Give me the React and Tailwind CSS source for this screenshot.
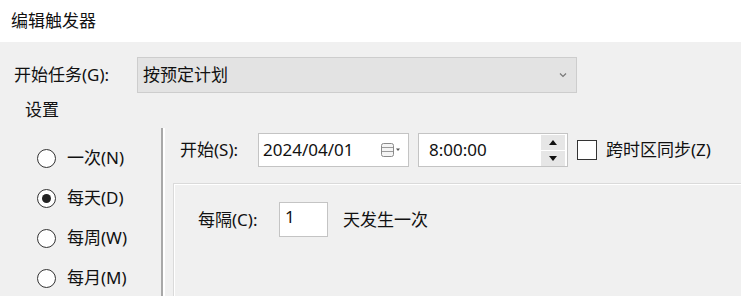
import { useState } from 'react';

const FONT = "font-['Noto_Sans','Noto_Sans_CJK_SC',sans-serif]";

const options = [
  { key: 'once', label: '一次(N)' },
  { key: 'daily', label: '每天(D)' },
  { key: 'weekly', label: '每周(W)' },
  { key: 'monthly', label: '每月(M)' },
];

function Radio({ checked, label, onClick }) {
  return (
    <div className="flex items-center h-[40px] cursor-default" onClick={onClick}>
      <span className="w-[19px] h-[19px] rounded-full border-[1.5px] border-[#333] bg-white flex items-center justify-center">
        {checked && <span className="w-[9px] h-[9px] rounded-full bg-[#222]" />}
      </span>
      <span className="ml-[11px]">{label}</span>
    </div>
  );
}

function CalendarIcon() {
  return (
    <svg width="22" height="16" viewBox="0 0 22 16" className="mr-[6px]">
      <rect x="1.5" y="1.5" width="12" height="13" rx="2" fill="#f4f4f4" stroke="#8a8a8a" strokeWidth="1" />
      <line x1="2" y1="5.5" x2="13" y2="5.5" stroke="#9a9a9a" />
      <line x1="2" y1="9.5" x2="13" y2="9.5" stroke="#9a9a9a" />
      <path d="M16 6.5 L20 6.5 L18 9 Z" fill="#555" />
    </svg>
  );
}

export default function App() {
  const [freq, setFreq] = useState('daily');
  const [sync, setSync] = useState(false);

  return (
    <div className={`w-[741px] h-[296px] overflow-hidden bg-[#f0f0f0] text-[17px] text-[#111] ${FONT}`}>
      {/* Title */}
      <div className="h-[42px] bg-white flex items-center px-[11px] text-[17px]">编辑触发器</div>

      {/* Begin task */}
      <div className="flex items-center mt-[15px] pl-[14px]">
        <span className="w-[123px]">开始任务(G):</span>
        <div className="w-[440px] h-[36px] bg-[#e3e3e3] border border-[#cdcdcd] flex items-center justify-between pl-[5px] pr-[8px]">
          <span>按预定计划</span>
          <svg width="10" height="8" viewBox="0 0 10 8">
            <path d="M2 2.5 L5 5.5 L8 2.5" fill="none" stroke="#777" strokeWidth="1.2" />
          </svg>
        </div>
      </div>

      <div className="h-[24px] flex items-center pl-[25px] mt-[5px]">设置</div>

      {/* Settings */}
      <div className="flex mt-[6px] h-[200px]">
        <div className="w-[161px] pl-[37px] pt-[10px]">
          {options.map((o) => (
            <Radio key={o.key} label={o.label} checked={freq === o.key} onClick={() => setFreq(o.key)} />
          ))}
        </div>
        <div className="w-[2px] bg-[#a8a8a8]" />
        <div className="w-[2px] bg-white" />

        <div className="flex-1 pt-[5px]">
          <div className="flex items-center h-[34px] pl-[15px]">
            <span className="w-[78px]">开始(S):</span>
            <div className="w-[151px] h-[34px] bg-white border border-[#c4c4c4] flex items-center justify-between pl-[4px]">
              <span>2024/04/01</span>
              <CalendarIcon />
            </div>
            <div className="ml-[9px] w-[150px] h-[34px] bg-white border border-[#c4c4c4] flex items-center justify-between pl-[10px] pr-[2px]">
              <span>8:00:00</span>
              <div className="flex flex-col gap-[1px]">
                <div className="w-[24px] h-[15px] bg-[#e6e6e6] flex items-center justify-center">
                  <svg width="8" height="5" viewBox="0 0 8 5"><path d="M0 5 L4 0 L8 5 Z" fill="#111" /></svg>
                </div>
                <div className="w-[24px] h-[15px] bg-[#e6e6e6] flex items-center justify-center">
                  <svg width="8" height="5" viewBox="0 0 8 5"><path d="M0 0 L4 5 L8 0 Z" fill="#111" /></svg>
                </div>
              </div>
            </div>
            <div className="ml-[9px] flex items-center cursor-default" onClick={() => setSync(!sync)}>
              <span className="w-[20px] h-[20px] border-[1.5px] border-[#333] bg-white flex items-center justify-center">
                {sync && <span className="text-[14px] leading-none">✓</span>}
              </span>
              <span className="ml-[9px]">跨时区同步(Z)</span>
            </div>
          </div>

          <div className="ml-[8px] mt-[16px] h-[200px] border-t border-l border-[#dadada] bg-[#f0f0f0] shadow-[inset_1px_1px_0_#ffffff]">
            <div className="flex items-center pl-[24px] pt-[18px]">
              <span className="w-[81px]">每隔(C):</span>
              <div className="w-[49px] h-[35px] bg-white border border-[#c4c4c4] pl-[5px] leading-[28px]">1</div>
              <span className="ml-[15px]">天发生一次</span>
            </div>
          </div>
        </div>
      </div>
    </div>
  );
}
